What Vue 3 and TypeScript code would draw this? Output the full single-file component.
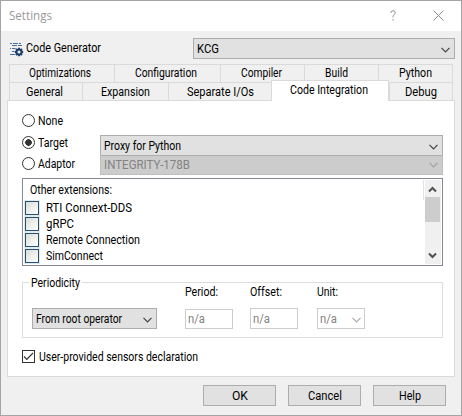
<script setup lang="ts">
import { ref } from 'vue'

interface Label {
  text: string
  width: number
}
interface Tab extends Label {
  size: number
  pad: number
  active?: boolean
}

// Squeezes a label horizontally so that it takes the given number of pixels.
const vFit = {
  mounted(el: HTMLElement, binding: { value: number }) {
    const natural = el.getBoundingClientRect().width
    el.style.transform = `scaleX(${binding.value / natural})`
    el.style.marginRight = `${binding.value - natural}px`
  },
}

const backTabs: Tab[] = [
  { text: 'Optimizations', width: 62, size: 105, pad: 19 },
  { text: 'Configuration', width: 62, size: 106, pad: 20 },
  { text: 'Compiler', width: 41, size: 84, pad: 20 },
  { text: 'Build', width: 23, size: 74, pad: 20 },
  { text: 'Python', width: 33, size: 75, pad: 20 },
]
const frontTabs: Tab[] = [
  { text: 'General', width: 37, size: 73, pad: 16 },
  { text: 'Expansion', width: 49, size: 86, pad: 18 },
  { text: 'Separate I/Os', width: 67, size: 103, pad: 18 },
  { text: 'Code Integration', width: 78, size: 118, pad: 18, active: true },
  { text: 'Debug', width: 32, size: 64, pad: 15 },
]
const modes: Label[] = [
  { text: 'None', width: 25 },
  { text: 'Target', width: 30 },
  { text: 'Adaptor', width: 37 },
]
const extensions: Label[] = [
  { text: 'RTI Connext-DDS', width: 86 },
  { text: 'gRPC', width: 28 },
  { text: 'Remote Connection', width: 94 },
  { text: 'SimConnect', width: 57 },
]
const buttons: Label[] = [
  { text: 'OK', width: 16 },
  { text: 'Cancel', width: 34 },
  { text: 'Help', width: 22 },
]
const mode = ref('Target')
const sensors = ref(true)
</script>

<template>
  <div class="window">
    <header class="title">
      <span v-fit="43" class="t">Settings</span>
      <svg class="help" width="7" height="11" viewBox="0 0 7 11"><path d="M1 3V2.2Q1.2.8 3 .8 5.2.8 5.2 2.7 5.2 3.8 4 4.8 3 5.6 3 6.8V7.4M3 9v1.4" /></svg>
      <svg class="close" width="11" height="11" viewBox="0 0 11 11"><path d="M.5.5l10 10M10.5.5l-10 10" /></svg>
    </header>

    <div class="generator">
      <svg class="gen-icon" width="14" height="15" viewBox="0 0 14 15">
        <path class="lines" d="M0 .5h2M3 .5h5M9 .5h2M2 2.5h5M8 2.5h4M0 5.5h1M2 5.5h4M2 8.5h3M0 11.5h5" />
        <circle class="halo" cx="9" cy="9" r="4.8" />
        <path class="teeth" d="M9 4.8v8.4M4.8 9h8.4M6 6l6 6M12 6l-6 6" />
        <circle class="gear" cx="9" cy="9" r="2.5" />
      </svg>
      <span v-fit="75" class="t">Code Generator</span>
      <div class="select wide">
        <span v-fit="22" class="t">KCG</span>
        <svg class="chev" width="9" height="6" viewBox="0 0 9 6"><path d="M.5.8l4 4 4-4" /></svg>
      </div>
    </div>

    <nav class="tabs back">
      <div v-for="tab in backTabs" :key="tab.text" class="tab" :style="{ width: tab.size + 'px', paddingLeft: tab.pad + 'px' }">
        <span v-fit="tab.width" class="t">{{ tab.text }}</span>
      </div>
    </nav>
    <nav class="tabs front">
      <div v-for="tab in frontTabs" :key="tab.text" class="tab" :class="{ active: tab.active }" :style="{ width: tab.size + 'px', paddingLeft: tab.pad + 'px' }">
        <span v-fit="tab.width" class="t">{{ tab.text }}</span>
      </div>
    </nav>

    <main class="panel">
      <section class="modes">
        <div class="radios">
          <div v-for="m in modes" :key="m.text" class="radio" @click="mode = m.text">
            <i class="dot" :class="{ on: mode === m.text }"></i>
            <span v-fit="m.width" class="t">{{ m.text }}</span>
          </div>
        </div>
        <div class="choices">
          <div class="select target">
            <span v-fit="77" class="t">Proxy for Python</span>
            <svg class="chev" width="9" height="6" viewBox="0 0 9 6"><path d="M.5.8l4 4 4-4" /></svg>
          </div>
          <div class="select adaptor">
            <span v-fit="86" class="t">INTEGRITY-178B</span>
            <svg class="chev" width="9" height="6" viewBox="0 0 9 6"><path d="M.5.8l4 4 4-4" /></svg>
          </div>
        </div>
      </section>

      <section class="list">
        <div class="items">
          <div class="caption"><span v-fit="82" class="t">Other extensions:</span></div>
          <div v-for="e in extensions" :key="e.text" class="item">
            <i class="box"></i>
            <span v-fit="e.width" class="t">{{ e.text }}</span>
          </div>
        </div>
        <div class="edge"></div>
        <div class="scroll">
          <svg width="9" height="7" viewBox="0 0 9 7"><path d="M1 5.5l3.5-3.5 3.5 3.5" /></svg>
          <div class="thumb"></div>
          <svg class="down" width="9" height="7" viewBox="0 0 9 7"><path d="M1 1.5l3.5 3.5 3.5-3.5" /></svg>
        </div>
      </section>

      <fieldset class="group">
        <legend><span v-fit="49" class="t">Periodicity</span></legend>
        <div class="select root">
          <span v-fit="86" class="t">From root operator</span>
          <svg class="chev" width="9" height="6" viewBox="0 0 9 6"><path d="M.5.8l4 4 4-4" /></svg>
        </div>
        <div class="field period">
          <span v-fit="33" class="t">Period:</span>
          <div class="value"><span v-fit="17" class="t">n/a</span></div>
        </div>
        <div class="field offset">
          <span v-fit="32" class="t">Offset:</span>
          <div class="value"><span v-fit="17" class="t">n/a</span></div>
        </div>
        <div class="field unit">
          <span v-fit="21" class="t">Unit:</span>
          <div class="value">
            <span v-fit="17" class="t">n/a</span>
            <svg class="chev" width="9" height="6" viewBox="0 0 9 6"><path d="M.5.8l4 4 4-4" /></svg>
          </div>
        </div>
      </fieldset>

      <div class="sensors" @click="sensors = !sensors">
        <i class="check"><svg v-if="sensors" width="11" height="11" viewBox="0 0 11 11"><path d="M1 5.5l2.8 2.8L10 2" /></svg></i>
        <span v-fit="159" class="t">User-provided sensors declaration</span>
      </div>
    </main>

    <footer class="buttons">
      <button v-for="b in buttons" :key="b.text" type="button"><span v-fit="b.width" class="t">{{ b.text }}</span></button>
    </footer>
  </div>
</template>

<style>
body {
  margin: 0;
}
</style>

<style scoped>
* {
  box-sizing: border-box;
}
.window {
  width: 462px;
  height: 416px;
  display: flex;
  flex-direction: column;
  border: 1px solid #a4a4a4;
  background: #f0f0f0;
  color: #000;
  font: 12px/16px Roboto, 'Liberation Sans', sans-serif;
}
.t {
  display: inline-block;
  flex: none;
  white-space: nowrap;
  transform-origin: 0 50%;
}
svg {
  display: block;
  flex: none;
  fill: none;
}
.title {
  height: 30px;
  flex: none;
  display: flex;
  align-items: flex-start;
  padding: 7px 17px 0 8px;
  background: #fff;
  color: #999;
  font-family: 'Open Sans', 'Noto Sans', sans-serif;
}
.title svg {
  stroke: #8c8c8c;
  margin-top: 2px;
}
.help {
  margin-left: auto;
  margin-right: 36px;
}
.generator {
  height: 22px;
  flex: none;
  display: flex;
  margin: 7px 6px 0 8px;
}
.gen-icon {
  margin: 5px 2px 0 1px;
}
.gen-icon .lines {
  stroke: #426d95;
}
.gen-icon .halo {
  fill: #f0f0f0;
}
.gen-icon .teeth {
  stroke: #1d416b;
  stroke-width: 2;
}
.gen-icon .gear {
  stroke: #1d416b;
  stroke-width: 2;
  fill: #f0f0f0;
}
.generator > .t {
  margin-top: 2px;
}
.select {
  display: flex;
  align-items: flex-start;
  border: 1px solid #adadad;
  background: #e1e1e1;
  padding: 2px 4px 0 3px;
}
.chev {
  margin: 5px 0 0 auto;
  stroke: #444;
  stroke-width: 1.2;
}
.wide {
  width: 262px;
  height: 21px;
  margin-left: auto;
}
.wide .chev {
  margin-top: 6px;
}
.tabs {
  display: flex;
  flex: none;
  margin-left: 8px;
  width: 444px;
  border-right: 1px solid #dadada;
}
.back {
  height: 18px;
  margin-top: 4px;
}
.front {
  height: 18px;
}
.tab {
  flex: none;
  border-left: 1px solid #dadada;
  border-top: 1px solid #dadada;
}
.back .tab:last-child {
  flex: 1;
}
.front .tab {
  padding-top: 1px;
}
.front .tab.active {
  height: 21px;
  margin-top: -2px;
  border-right: 1px solid #dadada;
  background: #fff;
  z-index: 1;
}
.panel {
  height: 277px;
  width: 448px;
  flex: none;
  margin-left: 6px;
  border: 1px solid #dadada;
  background: #fff;
  padding: 12px 11px 0 14px;
}
.modes {
  display: flex;
  height: 65px;
}
.radios {
  width: 78px;
}
.radio {
  display: flex;
  height: 22px;
}
.radio:last-child {
  height: 21px;
}
.radio:nth-child(2) {
  height: 21px;
  margin-top: 0;
}
.dot {
  width: 13px;
  height: 13px;
  flex: none;
  margin: 1px 3px 0 0;
  border: 1px solid #333;
  border-radius: 50%;
}
.dot.on {
  background: radial-gradient(circle, #333 0 3px, #fff 3.6px);
}
.choices {
  padding-top: 22px;
  width: 343px;
}
.target {
  height: 21px;
}
.target .chev {
  margin-top: 6px;
}
.adaptor {
  height: 20px;
  margin-top: -1px;
  border-color: #bfbfbf;
  border-top-color: #adadad;
  background: #ccc;
  color: #838383;
  padding-top: 1px;
}
.adaptor .chev {
  stroke: #a0a0a0;
}
.list {
  height: 88px;
  width: 421px;
  display: flex;
  border: 1px solid #828790;
  padding: 1px;
}
.items {
  flex: 1;
  padding: 2px 0 0 1px;
}
.caption {
  height: 18px;
  padding-left: 5px;
}
.item {
  height: 16px;
  display: flex;
}
.box {
  width: 14px;
  height: 14px;
  flex: none;
  margin-top: 1px;
  margin-right: 7px;
  border: 1px solid #1c5180;
  outline: 1px solid #e9e9e4;
  background: linear-gradient(135deg, #dcdcd7, #fff);
}
.edge {
  width: 1px;
  height: 20px;
  margin-right: 1px;
  background: #e3e3e3;
}
.scroll {
  width: 16px;
  display: flex;
  flex-direction: column;
  align-items: flex-start;
  background: #f0f0f0;
}
.scroll svg {
  margin: 6px 0 4px 3px;
  stroke: #505050;
  stroke-width: 2;
}
.thumb {
  width: 15px;
  height: 25px;
  background: #cdcdcd;
}
.scroll .down {
  margin-top: auto;
  margin-bottom: 5px;
}
.group {
  width: 421px;
  height: 64px;
  margin: 8px 0 0;
  padding: 0;
  border: 1px solid #dcdcdc;
  display: flex;
  min-width: 0;
}
legend {
  height: 17px;
  margin-left: 6px;
  padding: 1px 2px 0;
}
.root {
  width: 125px;
  height: 21px;
  margin: 17px 28px 0 9px;
}
.root .chev {
  margin-top: 6px;
}
.field {
  width: 48px;
  margin-right: 17px;
  margin-top: -7px;
}
.unit {
  width: 48px;
  margin-right: 0;
  margin-left: 2px;
}
.field > .t {
  display: block;
  width: max-content;
  margin-top: 0;
}
.value {
  display: flex;
  height: 21px;
  margin-top: 8px;
  padding: 2px 3px 0 2px;
  border: 1px solid #ccc;
  color: #838383;
}
.period .value {
  height: 20px;
  margin-top: 9px;
  padding-top: 1px;
}
.unit .chev {
  margin-top: 6px;
  stroke: #aaa;
}
.sensors {
  display: flex;
  margin-top: 11px;
}
.check {
  width: 13px;
  height: 13px;
  flex: none;
  margin: 1px 4px 0 0;
  border: 1px solid #333;
}
.check svg {
  stroke: #333;
  stroke-width: 1.2;
}
.buttons {
  display: flex;
  gap: 12px;
  margin: 8px 0 0 202px;
}
button {
  width: 73px;
  height: 21px;
  display: flex;
  justify-content: center;
  border: 1px solid #adadad;
  background: #e1e1e1;
  color: #000;
  padding: 2px 0 0;
  font: inherit;
}
</style>
